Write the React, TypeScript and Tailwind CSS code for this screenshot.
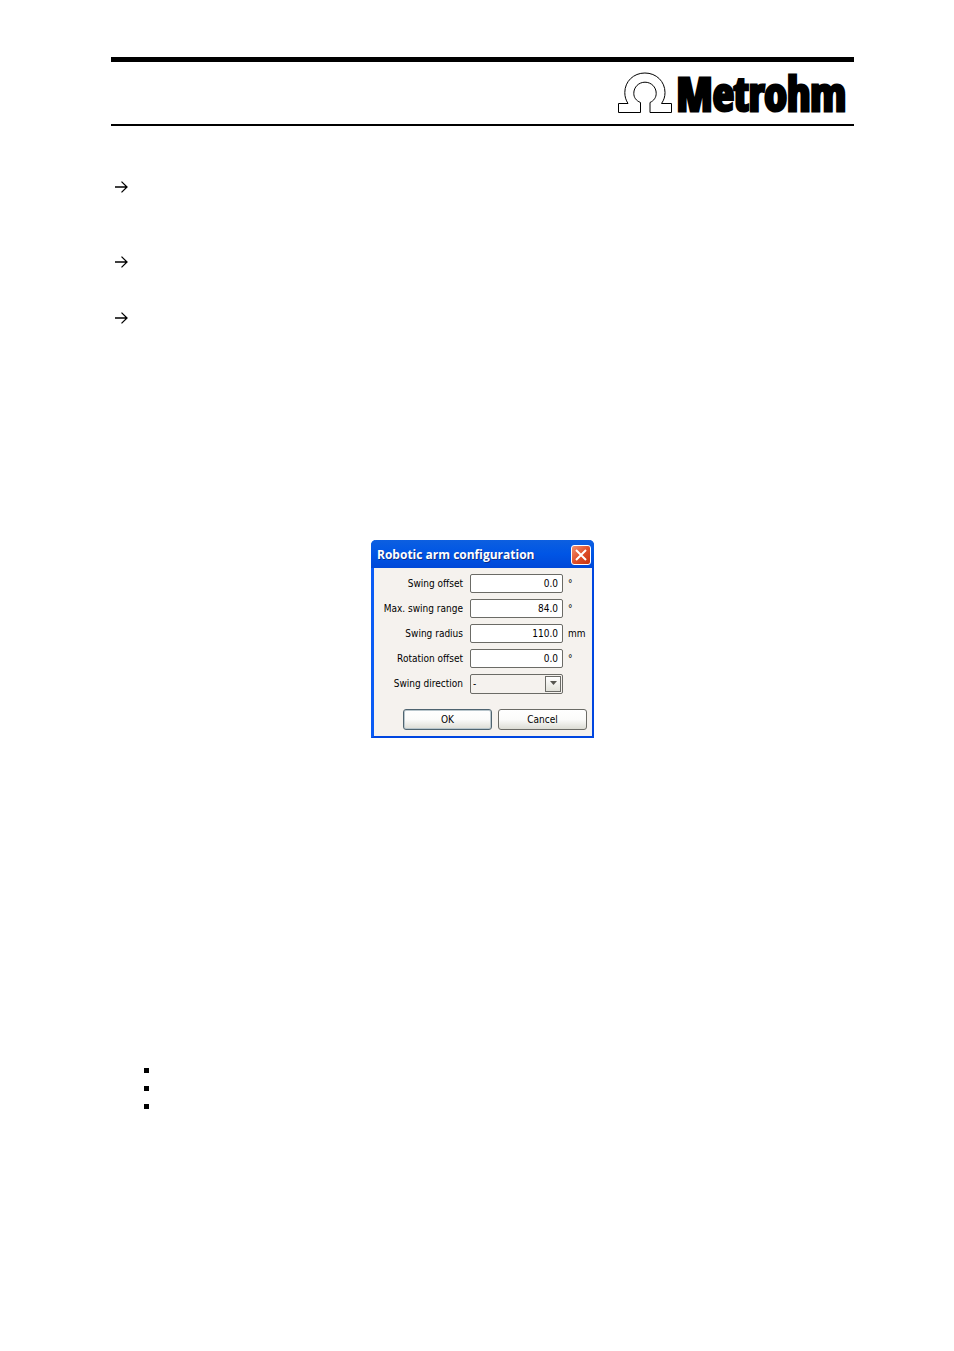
import { useState } from 'react'
import type { ReactNode } from 'react'

interface FieldProps {
  id: string
  label: string
  unit?: string
  children: ReactNode
}

const fields = [
  { id: 'swing-offset', label: 'Swing offset', value: '0.0', unit: '°' },
  { id: 'max-swing-range', label: 'Max. swing range', value: '84.0', unit: '°' },
  { id: 'swing-radius', label: 'Swing radius', value: '110.0', unit: 'mm' },
  { id: 'rotation-offset', label: 'Rotation offset', value: '0.0', unit: '°' },
]

function OmegaLogo() {
  return (
    <svg width="56" height="42" viewBox="0 0 56 42" fill="none" stroke="black" strokeWidth="1" aria-hidden="true">
      <path d="M1.5 40.5V31.5H11C8.8 28 7.8 24.5 7.8 20.5C7.8 9.5 16.5 1 27.9 1C39.3 1 48 9.5 48 20.5C48 24.5 47 28 44.5 31.5H54.5V40.5H33V30.5C37 28.6 39.2 25.5 39.2 21.3C39.2 15 34.2 10.2 28 10.2C21.8 10.2 16.8 15 16.8 21.3C16.8 25.5 19 28.6 23.5 30.5V40.5Z" />
    </svg>
  )
}

function Arrow() {
  return (
    <svg width="13" height="12" viewBox="0 0 13 12" fill="none" stroke="black" strokeWidth="1.3" aria-hidden="true">
      <path d="M0 6H12M6.5 0.6L12 6L6.5 11.4" />
    </svg>
  )
}

function Field({ id, label, unit, children }: FieldProps) {
  return (
    <div className="grid h-[19px] grid-cols-[1fr_93px_24px] items-center">
      <label htmlFor={id} className="pr-[7px] text-right whitespace-nowrap">
        {label}
      </label>
      {children}
      <span className="pl-[5px]">{unit}</span>
    </div>
  )
}

function ConfigDialog() {
  const [values, setValues] = useState<Record<string, string>>(
    Object.fromEntries(fields.map((f) => [f.id, f.value]))
  )

  return (
    <section
      role="dialog"
      aria-labelledby="dialog-title"
      className="w-[223px] rounded-t-[5px] border-r-2 border-b-2 border-l-[3px] border-[#0046e0] border-l-[#0a5cf5] bg-[#f5f2ee] font-['DejaVu_Sans_Condensed','DejaVu_Sans',sans-serif] text-[10px] leading-4 text-black"
    >
      {/* Title bar */}
      <div className="-mr-[2px] -ml-[3px] flex h-[28px] items-center justify-between rounded-t-[5px] bg-linear-to-b from-[#0d5fe0] via-[#0055e5] to-[#0048d8] pt-[2px] pr-[3px] pl-[6px]">
        <h1
          id="dialog-title"
          className="font-['Open_Sans',sans-serif] text-[12px] font-bold whitespace-nowrap text-white [text-shadow:1px_1px_0_#0b2f8a]"
        >
          Robotic arm configuration
        </h1>
        <button
          aria-label="Close"
          className="flex size-5 items-center justify-center rounded-[3px] border border-white bg-linear-to-br from-[#f09070] via-[#e0502a] to-[#c8340e]"
        >
          <svg width="12" height="12" viewBox="0 0 12 12" stroke="white" strokeWidth="2" aria-hidden="true">
            <path d="M1 1L11 11M11 1L1 11" />
          </svg>
        </button>
      </div>

      <form className="pt-[6px] pr-[5px] pb-[6px]" onSubmit={(e) => e.preventDefault()}>
        <div className="flex flex-col gap-[6px]">
          {fields.map((f) => (
            <Field key={f.id} id={f.id} label={f.label} unit={f.unit}>
              <input
                id={f.id}
                value={values[f.id]}
                onChange={(e) => setValues({ ...values, [f.id]: e.target.value })}
                className="h-[19px] w-full rounded-[2px] border border-[#6b6b66] bg-white pr-[4px] text-right outline-none"
              />
            </Field>
          ))}
          <Field id="swing-direction" label="Swing direction">
            <div className="relative">
              <select
                id="swing-direction"
                className="block h-[20px] w-full appearance-none rounded-[2px] border border-[#6b6b66] bg-[#f5f2ee] pl-[2px] outline-none"
              >
                <option>-</option>
              </select>
              <span className="pointer-events-none absolute top-[2px] right-[2px] flex size-4 justify-center border border-[#6b6b66] bg-linear-to-b from-white to-[#e2e2da] pt-[4px]">
                <svg width="7" height="4" viewBox="0 0 7 4" fill="#55554f" aria-hidden="true">
                  <path d="M0 0H7L3.5 4Z" />
                </svg>
              </span>
            </div>
          </Field>
        </div>

        <div className="mt-4 flex justify-end gap-[6px]">
          <button className="h-[21px] w-[89px] rounded-[3px] border border-[#4f6470] bg-linear-to-b from-white via-[#fbfbfa] to-[#dcdcd4] shadow-[inset_0_0_0_1px_#b9c6cc]">
            OK
          </button>
          <button className="h-[21px] w-[89px] rounded-[3px] border border-[#6b6b66] bg-linear-to-b from-white via-[#fbfbfa] to-[#dcdcd4]">
            Cancel
          </button>
        </div>
      </form>
    </section>
  )
}

export default function App() {
  return (
    <div className="min-h-screen bg-white pt-[57px] pr-[100px] pb-16 pl-[111px] text-black">
      <header className="flex h-[69px] items-center justify-end gap-1 border-t-5 border-b-2 border-black pr-2">
        <OmegaLogo />
        <span className="font-['Open_Sans_Condensed','Roboto_Condensed','Noto_Sans_ExtraCondensed','Noto_Sans_Condensed','Liberation_Sans',sans-serif] text-[46px] leading-none font-bold [-webkit-text-stroke:3px_black]">
          Metrohm
        </span>
      </header>

      <main>
        <ul className="pt-[55px] pl-1">
          <li className="h-[75px]"><Arrow /></li>
          <li className="h-[56px]"><Arrow /></li>
          <li><Arrow /></li>
        </ul>

        <div className="mt-[216px] flex justify-center">
          <ConfigDialog />
        </div>

        <ul className="mt-[323px] pl-[33px]">
          {[1, 2, 3].map((n) => (
            <li key={n} className="flex h-[18px] items-center">
              <span className="size-[5px] bg-black" />
            </li>
          ))}
        </ul>
      </main>
    </div>
  )
}
